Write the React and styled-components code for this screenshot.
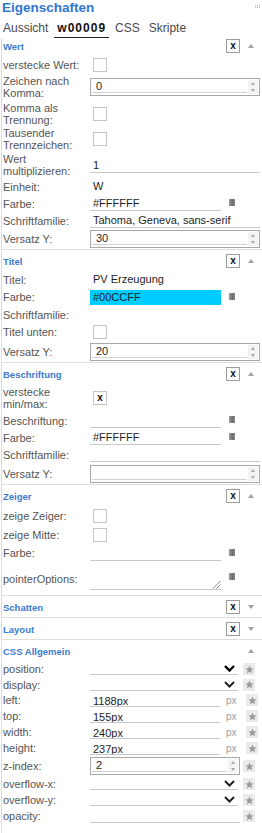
import React from 'react';
import styled, { createGlobalStyle } from 'styled-components';

const GlobalStyle = createGlobalStyle`
  html, body {
    margin: 0;
    padding: 0;
    background: #fff;
  }
  body {
    font-family: "Liberation Sans", Arial, sans-serif;
    font-size: 11px;
    color: #555;
    overflow: hidden;
  }
`;

const Panel = styled.div`
  width: 262px;
  height: 833px;
  overflow: hidden;
`;

const TitleBar = styled.div`
  display: flex;
  justify-content: space-between;
  height: 18px;
  padding: 0 1px 0 2px;
`;

const Title = styled.h1`
  margin: 0;
  font-size: 13.5px;
  line-height: 16px;
  font-weight: bold;
  color: #2f76d2;
`;

const Grip = styled.svg`
  margin-top: 5px;
`;

const Tabs = styled.div`
  display: flex;
  gap: 3px;
  height: 20px;
`;

const Tab = styled.div`
  padding: 1px 3px 0;
  height: 18px;
  line-height: 18px;
  font-size: 12px;
  color: ${(p) => (p.$active ? '#111' : '#4a4a4a')};
  font-weight: ${(p) => (p.$active ? 'bold' : 'normal')};
  letter-spacing: ${(p) => (p.$active ? '1px' : '0')};
  border-bottom: 1px solid ${(p) => (p.$active ? '#222' : 'transparent')};
`;

const Body = styled.div`
  margin-left: 1px;
  border-left: 1px solid #dcdcdc;
`;

const Section = styled.section`
  & + & {
    border-top: 1px solid #dedede;
  }
`;

const Head = styled.div`
  display: flex;
  align-items: center;
  height: 14px;
  padding: ${(p) => (p.$first ? '1px 0 3px' : '4px 0 3px')};
`;

const HeadTitle = styled.div`
  flex: 1;
  padding-left: 1px;
  font-size: 9.5px;
  font-weight: bold;
  color: #3a7bd0;
`;

const XBox = styled.div`
  box-sizing: border-box;
  width: 14px;
  height: 14px;
  border: 1px solid #9c9c9c;
  display: flex;
  align-items: center;
  justify-content: center;
  font-size: 10px;
  font-weight: bold;
  line-height: 1;
  color: #111;
`;

const ArrowSlot = styled.div`
  width: 22px;
  display: flex;
  justify-content: center;
`;

const Arrow = styled.span`
  width: 0;
  height: 0;
  border-left: 3px solid transparent;
  border-right: 3px solid transparent;
  ${(p) => (p.$down ? 'border-top: 4px solid #a0a0a0;' : 'border-bottom: 4px solid #a0a0a0;')}
`;

const Row = styled.div`
  display: flex;
  align-items: center;
  min-height: ${(p) => p.$h || 17}px;
  padding-right: 2px;
`;

const Label = styled.div`
  flex: none;
  width: 87px;
  padding-left: 1px;
  line-height: 12px;
  color: #555;
`;

const Control = styled.div`
  flex: 1;
  display: flex;
  align-items: center;
  align-self: ${(p) => p.$align || 'center'};
  margin-top: ${(p) => p.$top || 0}px;
`;

const Check = styled.div`
  box-sizing: border-box;
  width: 14px;
  height: 14px;
  margin-left: 3px;
  border: 1px solid #c4c4c4;
  background: #fff;
  display: flex;
  align-items: center;
  justify-content: center;
  font-size: 10px;
  font-weight: bold;
  line-height: 1;
  color: #111;
`;

const TextField = styled.div`
  box-sizing: border-box;
  ${(p) => (p.$w ? `width: ${p.$w}px;` : 'flex: 1;')}
  height: ${(p) => p.$height || 15}px;
  padding-left: 3px;
  line-height: 14px;
  color: #1e1e1e;
  white-space: nowrap;
  overflow: hidden;
  background: ${(p) => p.$bg || 'transparent'};
  border-bottom: 1px solid ${(p) => (p.$line ? '#c8c8c8' : 'transparent')};
`;

const TextArea = styled.div`
  box-sizing: border-box;
  width: 131px;
  height: 26px;
  border-bottom: 1px solid #c8c8c8;
  display: flex;
  align-items: flex-end;
  justify-content: flex-end;
`;

const Swatch = styled.div`
  width: 6px;
  height: 7px;
  margin: 0 0 2px 8px;
  background: linear-gradient(90deg, #9a9a9a, #6e6e6e 60%, #8a8a8a);
`;

const NumberBox = styled.div`
  box-sizing: border-box;
  ${(p) => (p.$w ? `width: ${p.$w}px;` : 'flex: 1;')}
  height: 18px;
  border: 1px solid #a8a8a8;
  display: flex;
`;

const NumberValue = styled.div`
  flex: 1;
  margin: 0 1px 2px 1px;
  padding-left: 4px;
  line-height: 14px;
  color: #1e1e1e;
  border-bottom: 1px solid #d2d2d2;
`;

const Spinner = styled.div`
  width: 10px;
  margin: 1px 1px 1px 0;
  padding: 2px 0;
  box-sizing: border-box;
  background: #f3f3f3;
  display: flex;
  flex-direction: column;
  justify-content: space-between;
  align-items: center;
`;

const SpinArrow = styled.span`
  width: 0;
  height: 0;
  border-left: 2.5px solid transparent;
  border-right: 2.5px solid transparent;
  ${(p) => (p.$down ? 'border-top: 3px solid #a8a8a8;' : 'border-bottom: 3px solid #a8a8a8;')}
`;

const Select = styled.div`
  box-sizing: border-box;
  width: 148px;
  height: 12px;
  padding-right: 3px;
  border-bottom: 1px solid #c8c8c8;
  display: flex;
  align-items: center;
  justify-content: flex-end;
`;

const Unit = styled.span`
  width: 17px;
  padding-left: 6px;
  font-size: 10px;
  color: #9a9a9a;
`;

const StarButton = styled.div`
  width: 12px;
  height: 12px;
  margin-left: ${(p) => p.$gap ?? 5}px;
  align-self: ${(p) => p.$align || 'center'};
  background: #eaeaea;
  display: flex;
  align-items: center;
  justify-content: center;
`;

const StarBtn = (props) => (
  <StarButton {...props}>
    <svg width="9" height="9" viewBox="0 0 10 10">
      <path
        d="M5 0.6 L6.3 3.6 L9.5 3.8 L7.1 5.9 L7.9 9.2 L5 7.5 L2.1 9.2 L2.9 5.9 L0.5 3.8 L3.7 3.6 Z"
        fill="#9a9a9a"
      />
    </svg>
  </StarButton>
);

const Chevron = ({ bold }) => (
  <svg width="11" height="7" viewBox="0 0 11 7">
    <polyline
      points="1,1 5.5,5.5 10,1"
      fill="none"
      stroke={bold ? '#000' : '#222'}
      strokeWidth={bold ? 2.4 : 2}
    />
  </svg>
);

const ResizeGrip = () => (
  <svg width="9" height="9" viewBox="0 0 9 9">
    <line x1="8.5" y1="1" x2="1" y2="8.5" stroke="#777" strokeWidth="0.9" />
    <line x1="8.5" y1="4.5" x2="4.5" y2="8.5" stroke="#777" strokeWidth="0.9" />
  </svg>
);

const SectionHead = ({ title, first, close = true, down }) => (
  <Head $first={first}>
    <HeadTitle>{title}</HeadTitle>
    {close && <XBox>x</XBox>}
    <ArrowSlot>
      <Arrow $down={down} />
    </ArrowSlot>
  </Head>
);

const Number = ({ value, w }) => (
  <NumberBox $w={w}>
    <NumberValue>{value}</NumberValue>
    <Spinner>
      <SpinArrow />
      <SpinArrow $down />
    </Spinner>
  </NumberBox>
);

const CssSelect = ({ label, bold, h = 16 }) => (
  <Row $h={h}>
    <Label>{label}</Label>
    <Control>
      <Select>
        <Chevron bold={bold} />
      </Select>
      <StarBtn />
    </Control>
  </Row>
);

const CssPx = ({ label, value }) => (
  <Row $h={16}>
    <Label>{label}</Label>
    <Control>
      <TextField $w={130} $height={13} $line>{value}</TextField>
      <Unit>px</Unit>
      <StarBtn $gap={3} />
    </Control>
  </Row>
);

export default function App() {
  return (
    <Panel>
      <GlobalStyle />
      <TitleBar>
        <Title>Eigenschaften</Title>
        <Grip width="6" height="4" viewBox="0 0 6 4">
          {[0, 2, 4].map((x) => (
            <React.Fragment key={x}>
              <rect x={x} y="0" width="1" height="1" fill="#b8b8b8" />
              <rect x={x} y="2" width="1" height="1" fill="#b8b8b8" />
            </React.Fragment>
          ))}
        </Grip>
      </TitleBar>
      <Tabs>
        <Tab>Aussicht</Tab>
        <Tab $active>w00009</Tab>
        <Tab>CSS</Tab>
        <Tab>Skripte</Tab>
      </Tabs>

      <Body>
        <Section>
          <SectionHead title="Wert" first />
          <Row>
            <Label>verstecke Wert:</Label>
            <Control><Check /></Control>
          </Row>
          <Row $h={28}>
            <Label>Zeichen nach<br />Komma:</Label>
            <Control><Number value="0" /></Control>
          </Row>
          <Row $h={25}>
            <Label>Komma als<br />Trennung:</Label>
            <Control><Check /></Control>
          </Row>
          <Row $h={26}>
            <Label>Tausender<br />Trennzeichen:</Label>
            <Control><Check /></Control>
          </Row>
          <Row $h={26}>
            <Label>Wert<br />multiplizieren:</Label>
            <Control><TextField $line>1</TextField></Control>
          </Row>
          <Row>
            <Label>Einheit:</Label>
            <Control><TextField>W</TextField></Control>
          </Row>
          <Row>
            <Label>Farbe:</Label>
            <Control>
              <TextField $w={131} $line>#FFFFFF</TextField>
              <Swatch />
            </Control>
          </Row>
          <Row>
            <Label>Schriftfamilie:</Label>
            <Control><TextField $line>Tahoma, Geneva, sans-serif</TextField></Control>
          </Row>
          <Row $h={20}>
            <Label>Versatz Y:</Label>
            <Control><Number value="30" /></Control>
          </Row>
        </Section>

        <Section>
          <SectionHead title="Titel" />
          <Row>
            <Label>Titel:</Label>
            <Control><TextField>PV Erzeugung</TextField></Control>
          </Row>
          <Row $h={18}>
            <Label>Farbe:</Label>
            <Control>
              <TextField $w={131} $bg="#00ccff" $height={15}>#00CCFF</TextField>
              <Swatch />
            </Control>
          </Row>
          <Row>
            <Label>Schriftfamilie:</Label>
            <Control><TextField /></Control>
          </Row>
          <Row $h={18}>
            <Label>Titel unten:</Label>
            <Control><Check /></Control>
          </Row>
          <Row $h={21}>
            <Label>Versatz Y:</Label>
            <Control><Number value="20" /></Control>
          </Row>
        </Section>

        <Section>
          <SectionHead title="Beschriftung" />
          <Row $h={28}>
            <Label>verstecke<br />min/max:</Label>
            <Control><Check>x</Check></Control>
          </Row>
          <Row>
            <Label>Beschriftung:</Label>
            <Control>
              <TextField $w={131} $line />
              <Swatch />
            </Control>
          </Row>
          <Row>
            <Label>Farbe:</Label>
            <Control>
              <TextField $w={131} $line>#FFFFFF</TextField>
              <Swatch />
            </Control>
          </Row>
          <Row>
            <Label>Schriftfamilie:</Label>
            <Control><TextField $line /></Control>
          </Row>
          <Row $h={21}>
            <Label>Versatz Y:</Label>
            <Control><Number value="" /></Control>
          </Row>
        </Section>

        <Section>
          <SectionHead title="Zeiger" />
          <Row $h={19}>
            <Label>zeige Zeiger:</Label>
            <Control><Check /></Control>
          </Row>
          <Row $h={19}>
            <Label>zeige Mitte:</Label>
            <Control><Check /></Control>
          </Row>
          <Row $h={18}>
            <Label>Farbe:</Label>
            <Control>
              <TextField $w={131} $line />
              <Swatch />
            </Control>
          </Row>
          <Row $h={33}>
            <Label>pointerOptions:</Label>
            <Control $align="flex-start" $top={2}>
              <TextArea>
                <ResizeGrip />
              </TextArea>
              <Swatch />
            </Control>
          </Row>
        </Section>

        <Section>
          <SectionHead title="Schatten" down />
        </Section>

        <Section>
          <SectionHead title="Layout" down />
        </Section>

        <Section>
          <SectionHead title="CSS Allgemein" close={false} />
          <CssSelect label="position:" bold />
          <CssSelect label="display:" h={15} />
          <CssPx label="left:" value="1188px" />
          <CssPx label="top:" value="155px" />
          <CssPx label="width:" value="240px" />
          <CssPx label="height:" value="237px" />
          <Row $h={20}>
            <Label>z-index:</Label>
            <Control>
              <Number value="2" w={150} />
              <StarBtn $gap={3} />
            </Control>
          </Row>
          <CssSelect label="overflow-x:" />
          <CssSelect label="overflow-y:" />
          <Row $h={16}>
            <Label>opacity:</Label>
            <Control>
              <TextField $w={150} $height={13} $line />
              <StarBtn $gap={3} />
            </Control>
          </Row>
          <Row $h={34}>
            <Label />
            <Control>
              <TextField $w={150} />
              <StarBtn $gap={3} $align="flex-start" />
            </Control>
          </Row>
        </Section>
      </Body>
    </Panel>
  );
}
